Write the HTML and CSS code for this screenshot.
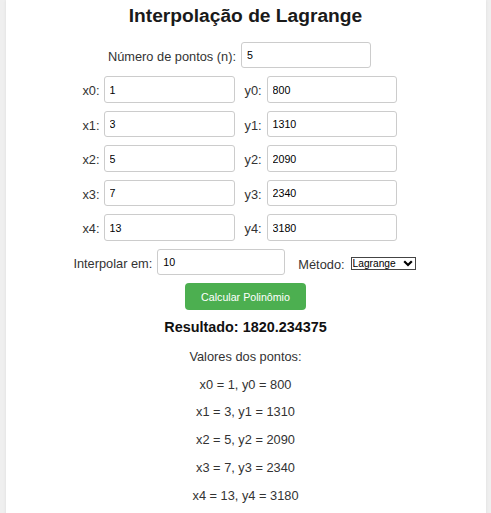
FILE: index.html
```html
<!DOCTYPE html>
<html lang="pt">
<head>
<meta charset="utf-8">
<title>Interpolação de Lagrange</title>
<link rel="stylesheet" href="styles.css">
</head>
<body>
<div class="container">
  <h1 class="title">Interpolação de Lagrange</h1>

  <div class="row">
    <label class="lbl lbl-n">Número de pontos (n):</label>
    <input class="field field-last" type="text" value="5">
  </div>

  <div class="row">
    <label class="lbl lbl-x">x0:</label>
    <input class="field field-mid" type="text" value="1">
    <label class="lbl lbl-y">y0:</label>
    <input class="field field-last" type="text" value="800">
  </div>
  <div class="row">
    <label class="lbl lbl-x">x1:</label>
    <input class="field field-mid" type="text" value="3">
    <label class="lbl lbl-y">y1:</label>
    <input class="field field-last" type="text" value="1310">
  </div>
  <div class="row">
    <label class="lbl lbl-x">x2:</label>
    <input class="field field-mid" type="text" value="5">
    <label class="lbl lbl-y">y2:</label>
    <input class="field field-last" type="text" value="2090">
  </div>
  <div class="row">
    <label class="lbl lbl-x">x3:</label>
    <input class="field field-mid" type="text" value="7">
    <label class="lbl lbl-y">y3:</label>
    <input class="field field-last" type="text" value="2340">
  </div>
  <div class="row">
    <label class="lbl lbl-x">x4:</label>
    <input class="field field-mid" type="text" value="13">
    <label class="lbl lbl-y">y4:</label>
    <input class="field field-last" type="text" value="3180">
  </div>

  <div class="row">
    <label class="lbl lbl-n">Interpolar em:</label>
    <input class="field field-interp" type="text" value="10">
    <label class="lbl lbl-metodo">Método:</label>
    <span class="select-wrap">
      <select class="select">
        <option>Lagrange</option>
      </select>
      <svg class="chev" width="10" height="7" viewBox="0 0 10 7"><path d="M1.2 1.2 L5 5 L8.8 1.2" fill="none" stroke="#000" stroke-width="2.2"/></svg>
    </span>
  </div>

  <div class="btn-row">
    <button class="btn">Calcular Polinômio</button>
  </div>

  <div class="result">Resultado: 1820.234375</div>

  <div class="points">
    <p>Valores dos pontos:</p>
    <p>x0 = 1, y0 = 800</p>
    <p>x1 = 3, y1 = 1310</p>
    <p>x2 = 5, y2 = 2090</p>
    <p>x3 = 7, y3 = 2340</p>
    <p>x4 = 13, y4 = 3180</p>
  </div>
</div>
</body>
</html>
```

FILE: styles.css
```css
html, body {
  margin: 0;
  padding: 0;
}
body {
  background: #efefef;
  font-family: "Liberation Sans", Arial, sans-serif;
  font-size: 12.8px;
  color: #333;
}
.container {
  width: 480px;
  margin: 0 auto;
  background: #fff;
  box-shadow: 0 0 3px rgba(0, 0, 0, 0.08);
  padding-top: 4.6px;
  padding-bottom: 20px;
  min-height: 513px;
  box-sizing: border-box;
}
.title {
  margin: 0 0 15.4px;
  font-size: 19.2px;
  line-height: 22px;
  font-weight: bold;
  text-align: center;
  color: #1a1a1a;
}
.row {
  display: flex;
  justify-content: center;
  align-items: center;
  margin-bottom: 8px;
}
.lbl {
  line-height: 15px;
  white-space: nowrap;
  position: relative;
  top: 1px;
}
.lbl-n { margin-right: 5px; }
.lbl-x { margin-right: 4px; }
.lbl-y { margin-right: 5px; }
.lbl-metodo { margin-right: 6px; top: 2px; }
.field {
  box-sizing: border-box;
  width: 130px;
  height: 26.5px;
  border: 1px solid #ccc;
  border-radius: 3px;
  padding: 0 5px;
  font-family: "Liberation Sans", Arial, sans-serif;
  font-size: 10.67px;
  color: #000;
  background: #fff;
  outline: none;
}
.field-mid { width: 131px; margin-right: 10px; }
.field-last { margin-right: 12px; }
.field-interp { width: 128px; margin-right: 13px; }
.select-wrap {
  position: relative;
  display: inline-block;
  margin-right: 2px;
  margin-top: 3px;
}
.select {
  appearance: none;
  -webkit-appearance: none;
  box-sizing: border-box;
  width: 65px;
  height: 12.5px;
  border: 1px solid #444;
  border-radius: 0;
  background: #fff;
  padding: 0 0 0 1px;
  margin: 0;
  font-family: "Liberation Sans", Arial, sans-serif;
  font-size: 10.2px;
  line-height: 10px;
  color: #000;
  display: block;
}
.chev {
  position: absolute;
  right: 3px;
  top: 3px;
  pointer-events: none;
}
.btn-row {
  display: flex;
  justify-content: center;
  margin-top: 3.5px;
}
.btn {
  height: 27px;
  padding: 0 16px;
  border: none;
  border-radius: 4px;
  background: #4caf50;
  color: #fff;
  font-family: "Liberation Sans", Arial, sans-serif;
  font-size: 10.67px;
  cursor: pointer;
}
.result {
  margin-top: 9px;
  text-align: center;
  font-size: 14.4px;
  line-height: 16.5px;
  font-weight: bold;
  color: #111;
}
.points {
  text-align: center;
}
.points p {
  margin: 12.8px 0;
  line-height: 15px;
}
```
